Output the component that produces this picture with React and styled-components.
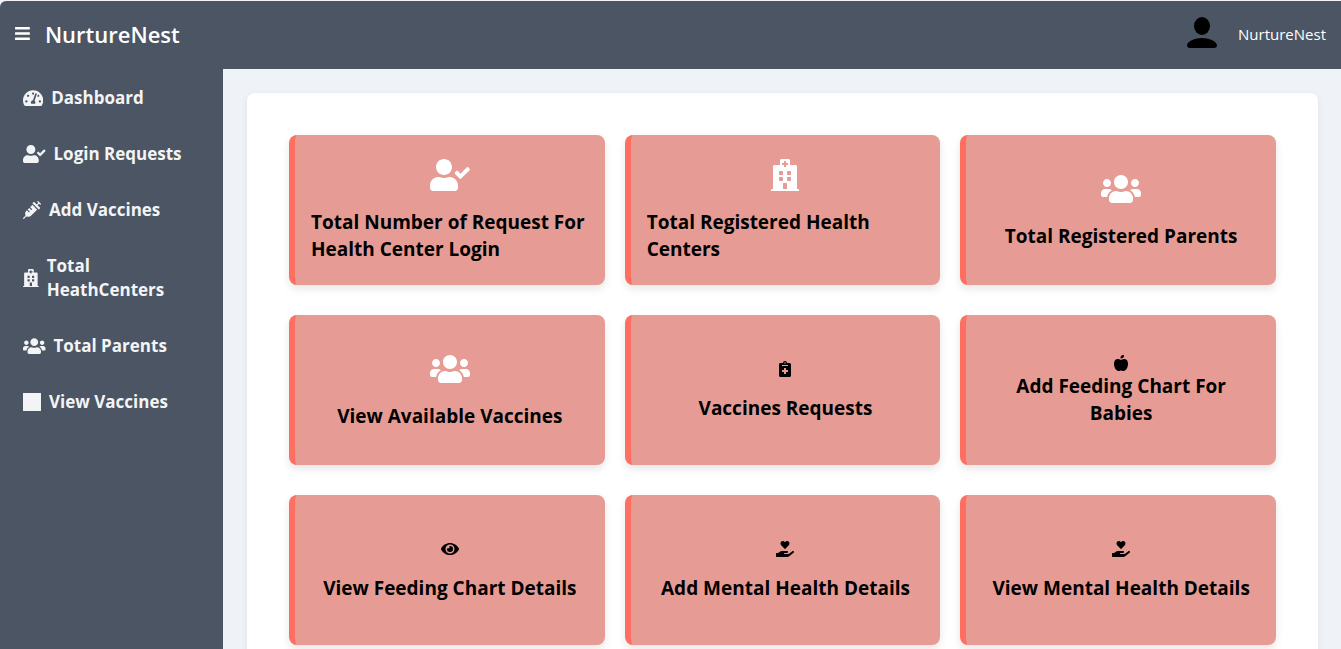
import React from "react";
import styled, { createGlobalStyle } from "styled-components";
import {
  FaTachometerAlt,
  FaUserCheck,
  FaSyringe,
  FaHospital,
  FaUsers,
  FaNotesMedical,
  FaAppleAlt,
  FaEye,
  FaHandHoldingHeart,
  FaBars,
} from "react-icons/fa";

const GlobalStyle = createGlobalStyle`
  *, *::before, *::after { box-sizing: border-box; }
  body {
    margin: 0;
    background: #f3f4f6;
    font-family: "Segoe UI", "Open Sans", "Noto Sans", sans-serif;
  }
`;

const Shell = styled.div`
  display: flex;
  flex-direction: column;
  height: 100vh;
  padding-top: 1px;
  overflow: hidden;
`;

const Header = styled.header`
  display: flex;
  flex: none;
  align-items: center;
  justify-content: space-between;
  height: 68px;
  padding: 0 15px 2px;
  background: #4b5563;
  border-top-left-radius: 6px;
  color: #fff;
`;

const Brand = styled.div`
  display: flex;
  align-items: center;
  gap: 15px;
`;

const MenuButton = styled.button`
  display: flex;
  padding: 0 0 2px;
  border: 0;
  background: none;
  color: inherit;
  font-size: 17px;
  cursor: pointer;
`;

const Title = styled.h1`
  margin: 0;
  font-size: 22px;
  line-height: 32px;
  font-weight: 600;
`;

const Profile = styled.div`
  display: flex;
  align-items: center;
  gap: 21px;
  font-size: 15px;
  line-height: 24px;
`;

const Avatar = styled.svg`
  display: block;
  width: 30px;
  height: 36px;
`;

const Body = styled.div`
  display: flex;
  flex: 1;
  min-height: 0;
`;

const Sidebar = styled.nav`
  flex: none;
  width: 223px;
  background: #4b5563;
`;

const NavLink = styled.a`
  display: flex;
  align-items: center;
  gap: 8px;
  padding: 17px 23px 15px;
  color: #f3f4f6;
  font-size: 17px;
  line-height: 24px;
  font-weight: 700;
  text-decoration: none;
`;

const NavIcon = styled.span`
  display: flex;
  flex: none;
  font-size: 18px;
`;

/* Glyphs share a height of 512 units and differ in width. */
const Glyph = styled.svg`
  flex: none;
  width: calc(1em * ${(p) => p.$units} / 512);
  height: 1em;
`;

const Square = styled.span`
  width: 18px;
  height: 18px;
  background: #f3f4f6;
`;

const Content = styled.main`
  flex: 1;
  min-width: 0;
  padding: 24px 23px 24px 24px;
  background: #eff3f8;
  overflow-y: auto;
  scrollbar-width: none;
`;

const Panel = styled.section`
  display: grid;
  grid-template-columns: repeat(3, minmax(0, 1fr));
  gap: 30px 20px;
  padding: 42px;
  background: #fff;
  border-radius: 8px;
  box-shadow: 0 2px 6px rgba(0, 0, 0, 0.08);
`;

const cardPadding = (p) => {
  if (p.$large) return "18px 16px 16px";
  return p.$tight ? "16px 32px" : "16px";
};

const cardGap = (p) => {
  if (p.$large) return "18px";
  return p.$tight ? "0" : "16px";
};

const Card = styled.a`
  display: flex;
  flex-direction: column;
  align-items: center;
  justify-content: center;
  gap: ${cardGap};
  min-height: 150px;
  padding: ${cardPadding};
  background: #e69c94;
  border-left: 6px solid #ff6f61;
  border-radius: 8px;
  box-shadow: 0 4px 8px rgba(0, 0, 0, 0.1);
  color: #000;
  text-align: ${(p) => (p.$tight ? "center" : "left")};
  text-decoration: none;
`;

const CardIcon = styled.span`
  display: flex;
  align-items: center;
  height: ${(p) => (p.$large ? "32px" : "20px")};
  font-size: ${(p) => (p.$large ? "32px" : "16px")};
  color: ${(p) => (p.$large ? "#fff" : "#000")};
`;

const CardTitle = styled.h2`
  margin: 0;
  font-size: 19px;
  line-height: 27px;
  font-weight: 700;
`;

const navItems = [
  { label: "Dashboard", icon: <Glyph as={FaTachometerAlt} $units={576} /> },
  { label: "Login Requests", icon: <Glyph as={FaUserCheck} $units={640} /> },
  { label: "Add Vaccines", icon: <Glyph as={FaSyringe} $units={512} /> },
  { label: "Total HeathCenters", icon: <Glyph as={FaHospital} $units={448} /> },
  { label: "Total Parents", icon: <Glyph as={FaUsers} $units={640} /> },
  { label: "View Vaccines", icon: <Square /> },
];

const cards = [
  {
    label: "Total Number of Request For Health Center Login",
    icon: <Glyph as={FaUserCheck} $units={640} />,
    large: true,
  },
  {
    label: "Total Registered Health Centers",
    icon: <Glyph as={FaHospital} $units={448} />,
    large: true,
  },
  { label: "Total Registered Parents", icon: <Glyph as={FaUsers} $units={640} />, large: true },
  { label: "View Available Vaccines", icon: <Glyph as={FaUsers} $units={640} />, large: true },
  { label: "Vaccines Requests", icon: <Glyph as={FaNotesMedical} $units={384} /> },
  {
    label: "Add Feeding Chart For Babies",
    icon: <Glyph as={FaAppleAlt} $units={448} />,
    tight: true,
  },
  { label: "View Feeding Chart Details", icon: <Glyph as={FaEye} $units={576} /> },
  { label: "Add Mental Health Details", icon: <Glyph as={FaHandHoldingHeart} $units={576} /> },
  { label: "View Mental Health Details", icon: <Glyph as={FaHandHoldingHeart} $units={576} /> },
];

export default function App() {
  return (
    <>
      <GlobalStyle />
      <Shell>
        <Header>
          <Brand>
            <MenuButton type="button" aria-label="Toggle menu">
              <Glyph as={FaBars} $units={448} />
            </MenuButton>
            <Title>NurtureNest</Title>
          </Brand>
          <Profile>
            <Avatar viewBox="0 0 30 36" aria-hidden="true">
              <ellipse cx="15" cy="10" rx="8" ry="9" />
              <path d="M0 29C1 25 8 22 15 22S29 25 30 29C30 31 29 32 27 32H3C1 32 0 31 0 29Z" />
            </Avatar>
            <span>NurtureNest</span>
          </Profile>
        </Header>
        <Body>
          <Sidebar>
            {navItems.map((item) => (
              <NavLink key={item.label} href="#">
                <NavIcon>{item.icon}</NavIcon>
                <span>{item.label}</span>
              </NavLink>
            ))}
          </Sidebar>
          <Content>
            <Panel>
              {cards.map((card) => (
                <Card key={card.label} href="#" $large={card.large} $tight={card.tight}>
                  <CardIcon $large={card.large}>{card.icon}</CardIcon>
                  <CardTitle>{card.label}</CardTitle>
                </Card>
              ))}
            </Panel>
          </Content>
        </Body>
      </Shell>
    </>
  );
}
